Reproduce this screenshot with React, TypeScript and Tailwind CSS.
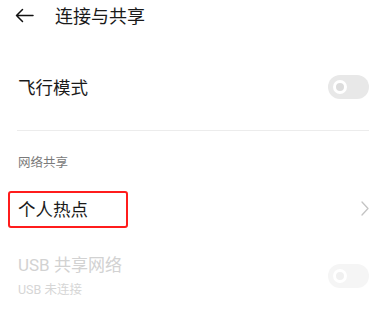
function Toggle({ faded }: { faded?: boolean }) {
  return (
    <div
      className={`flex h-[24px] w-[41px] items-center rounded-full pl-[5px] ${
        faded ? "bg-[#f5f5f5]" : "bg-[#e8e8e8]"
      }`}
    >
      <div
        className={`h-[14px] w-[14px] rounded-full border-[3px] border-white ${
          faded ? "bg-[#f0f0f0]" : "bg-[#dcdcdc]"
        }`}
      />
    </div>
  );
}

export default function App() {
  return (
    <div className="flex min-h-screen flex-col bg-white font-['Noto_Sans_CJK_SC','Noto_Sans',sans-serif] text-[#1a1a1a]">
      {/* Header */}
      <div className="flex h-[30px] items-center pl-[15px]">
        <svg width="19" height="15" viewBox="0 0 19 15" fill="none" stroke="#111" strokeWidth="1.5" strokeLinecap="round" strokeLinejoin="round">
          <path d="M18 7.5H1.5M7.5 1.5L1.5 7.5L7.5 13.5" />
        </svg>
        <span className="ml-[21px] text-[18px] leading-none">连接与共享</span>
      </div>

      {/* Airplane mode */}
      <div className="mt-[33px] flex h-[48px] items-center justify-between pl-[18px] pr-[20px]">
        <span className="text-[17.5px] leading-none">飞行模式</span>
        <Toggle />
      </div>

      <div className="ml-[17px] mr-[20px] mt-[19px] h-px bg-[#ececec]" />

      {/* Section label */}
      <div className="mt-[25px] pl-[18px] text-[12.5px] leading-none text-[#7a7a7a]">
        网络共享
      </div>

      {/* Hotspot */}
      <div className="relative mt-[21px] flex h-[38px] items-center justify-between pl-[18px] pr-[20px]">
        <span className="text-[17.5px] leading-none">个人热点</span>
        <svg width="8" height="15" viewBox="0 0 8 15" fill="none" stroke="#c4c4c4" strokeWidth="1.3" strokeLinecap="round" strokeLinejoin="round">
          <path d="M1 1L7 7.5L1 14" />
        </svg>
        <div className="absolute left-[8px] top-[1px] h-[37px] w-[120px] rounded-[3px] border-2 border-[#ff1c1c]" />
      </div>

      {/* USB tethering */}
      <div className="mt-[29px] flex items-center justify-between pl-[18px] pr-[20px]">
        <div className="flex flex-col">
          <span className="font-['Roboto','Noto_Sans_CJK_SC',sans-serif] text-[17px] leading-none text-[#d2d2d2]">
            USB 共享网络
          </span>
          <span className="mt-[10px] font-['Roboto','Noto_Sans_CJK_SC',sans-serif] text-[12.5px] leading-none text-[#d6d6d6]">
            USB 未连接
          </span>
        </div>
        <Toggle faded />
      </div>
    </div>
  );
}
